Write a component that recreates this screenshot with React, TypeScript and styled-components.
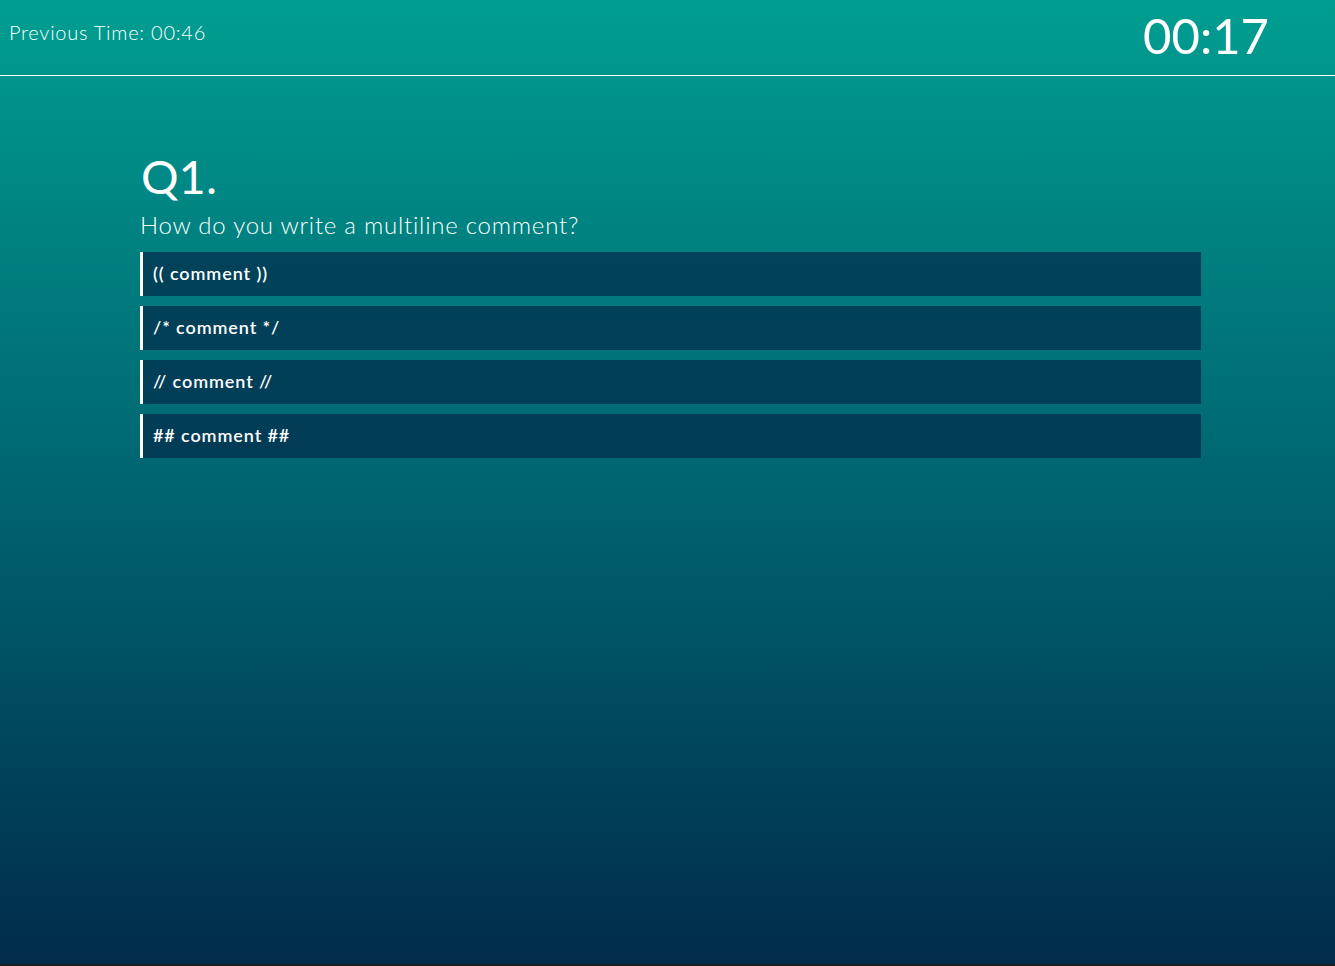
import React from "react";
import styled, { createGlobalStyle } from "styled-components";

const Global = createGlobalStyle`
  html, body { margin: 0; padding: 0; background: #1c1f22; }
  body { font-family: "Lato", "Open Sans", sans-serif; }
`;

const Page = styled.div`
  height: 964px;
  background: linear-gradient(180deg, #009e91 0%, #007b7d 30%, #005468 65%, #012b4b 100%);
  color: #ffffff;
  display: flex;
  flex-direction: column;
`;

const Header = styled.header`
  height: 75px;
  border-bottom: 1px solid #ffffff;
  display: flex;
  align-items: center;
  justify-content: space-between;
  padding: 0 66px 0 9px;
  box-sizing: content-box;
`;

const PrevTime = styled.div`
  font-size: 20px;
  font-weight: 300;
  letter-spacing: 0.75px;
  margin-top: -12px;
`;

const Timer = styled.div`
  font-size: 49px;
  font-weight: 400;
  letter-spacing: 0;
  margin-top: -5px;
`;

const Main = styled.main`
  margin: 0 0 0 140px;
  width: 1061px;
  padding-top: 70px;
  display: flex;
  flex-direction: column;
`;

const QNum = styled.h1`
  margin: 0 0 0 1px;
  font-size: 47px;
  font-weight: 400;
  line-height: 60px;
`;

const QText = styled.p`
  margin: 3px 0 11px 0;
  font-size: 24px;
  font-weight: 300;
  line-height: 32px;
  letter-spacing: 0.75px;
`;

const Options = styled.ul`
  list-style: none;
  margin: 0;
  padding: 0;
  display: flex;
  flex-direction: column;
  gap: 10px;
`;

const Option = styled.li`
  height: 44px;
  box-sizing: border-box;
  border-left: 3px solid #ffffff;
  background: rgba(1, 42, 74, 0.7);
  display: flex;
  align-items: center;
  padding: 0 0 3px 10px;
  font-size: 18px;
  font-weight: 600;
  letter-spacing: 0.9px;
`;

const options = ["(( comment ))", "/* comment */", "// comment //", "## comment ##"];

export default function App() {
  return (
    <>
      <Global />
      <Page>
        <Header>
          <PrevTime>Previous Time: 00:46</PrevTime>
          <Timer>00:17</Timer>
        </Header>
        <Main>
          <QNum>Q1.</QNum>
          <QText>How do you write a multiline comment?</QText>
          <Options>
            {options.map((o) => (
              <Option key={o}>{o}</Option>
            ))}
          </Options>
        </Main>
      </Page>
    </>
  );
}
